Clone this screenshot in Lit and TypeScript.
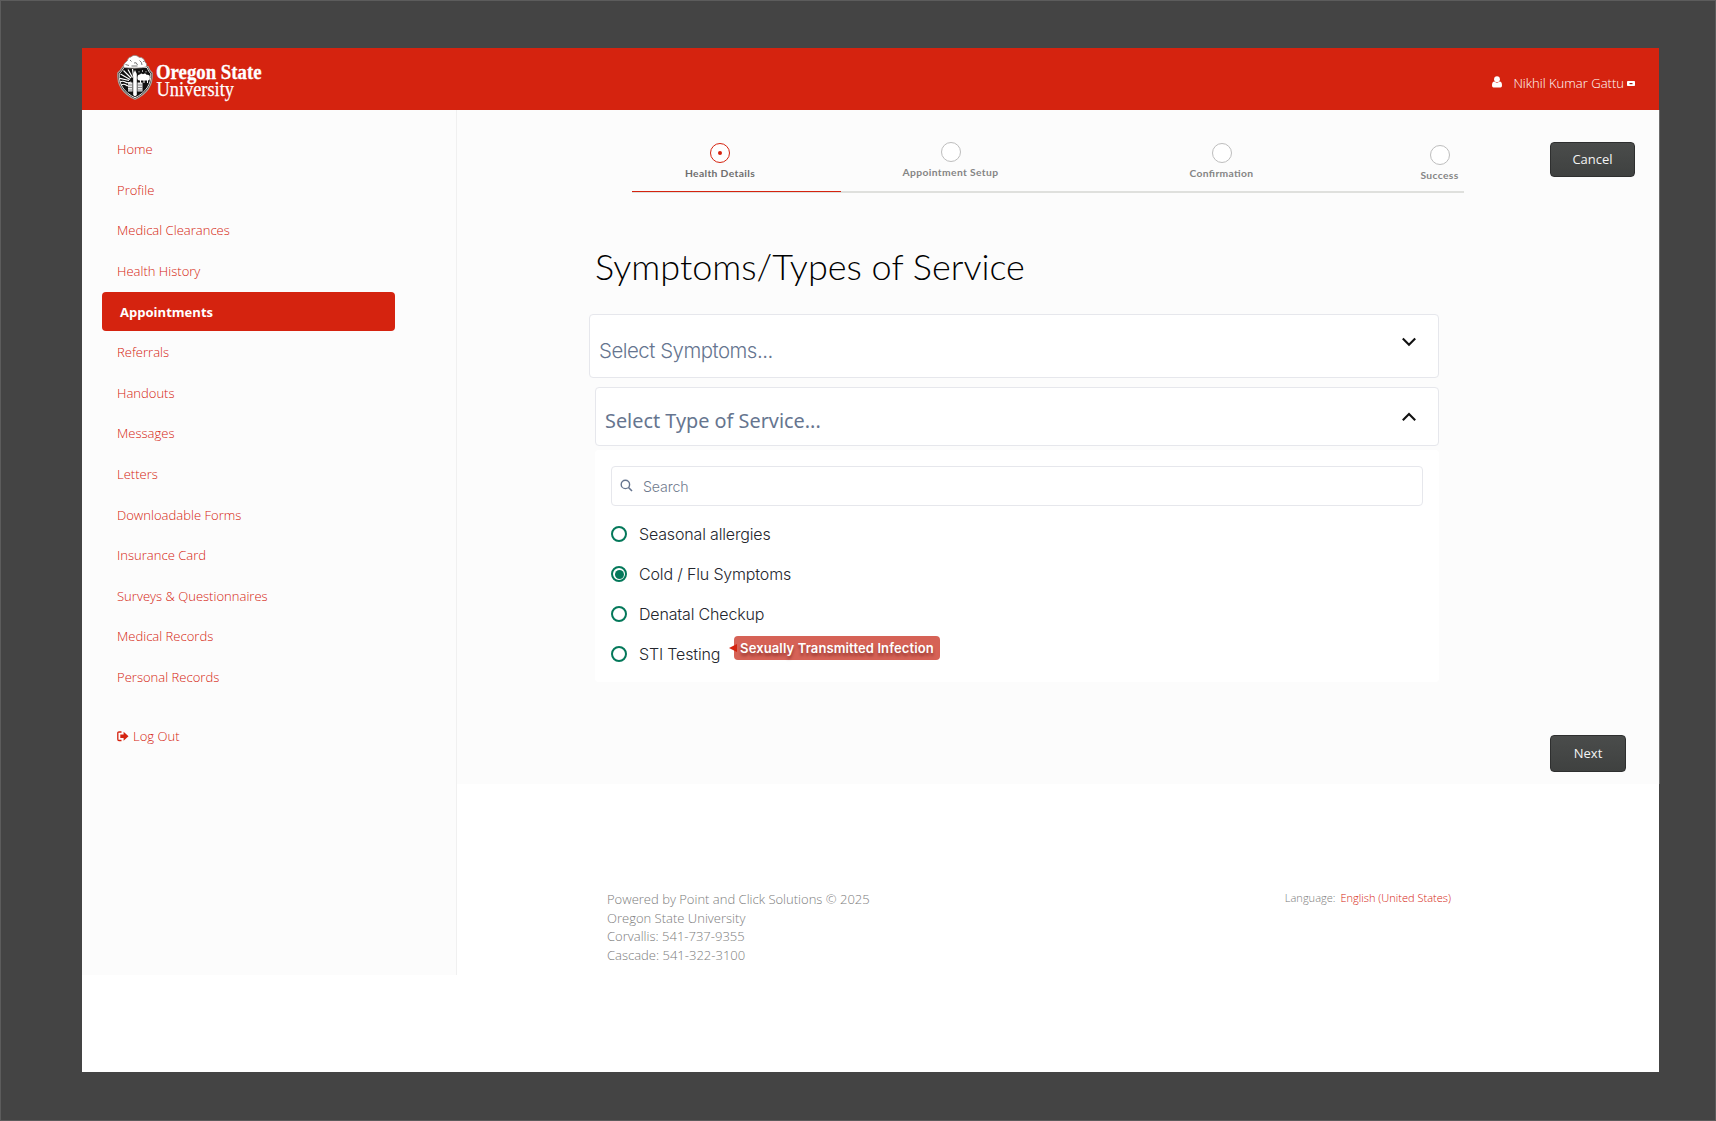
import { LitElement, html, css, svg } from "lit";
import { customElement, property, state } from "lit/decorators.js";
import { classMap } from "lit/directives/class-map.js";

const NAV = [
  "Home", "Profile", "Medical Clearances", "Health History", "Appointments",
  "Referrals", "Handouts", "Messages", "Letters", "Downloadable Forms",
  "Insurance Card", "Surveys & Questionnaires", "Medical Records", "Personal Records",
];

const SERVICES = ["Seasonal allergies", "Cold / Flu Symptoms", "Denatal Checkup", "STI Testing"];

@customElement("osu-logo")
export class OsuLogo extends LitElement {
  static styles = css`
    :host { display: block; width: 150px; height: 50px; }
    .logo { display: block; overflow: visible; }
    .name { font-family: "Liberation Serif", serif; fill: #fff; }
    .strong { font-weight: 700; font-size: 20.5px; stroke: #fff; stroke-width: 0.3px; }
    .light { font-weight: 400; font-size: 20.5px; stroke: #fff; stroke-width: 0.25px; }
  `;
  render() {
    return html`<svg class="logo" width="150" height="50" viewBox="0 0 150 50" role="img">
      ${svg`
      <path d="M.8 19 C3 17 4.500 15 6 12.500 L31 12.500 C32 15.500 33.500 17.500 35.200 19 C36 31 30 39.800 18 45.300 C6 39.800 0 31 .8 19Z" fill="#111" stroke="#a9a29c" stroke-width="1.200"/>
      <path d="M2.200 19.800 C4 18 5.500 16 7 13.500 L30 13.500 C31 16 32.300 18.300 33.800 19.800 C34.300 30.500 28.800 38.500 18 43.800 C7.200 38.500 1.700 30.500 2.200 19.800Z" fill="#111" stroke="#fff" stroke-width=".9"/>
      <path d="M6.300 13.200 C6.500 9.500 8.500 8.500 10.500 6.500 C10.800 4.500 12 3 14 3 C15.500 .8 20 .8 22 3.300 C25 3 27.500 5 28 8 C29.500 9 30 10.500 29.500 12.800 C24 14.500 12 14.500 6.300 13.200Z" fill="#fff" stroke="#8b8580" stroke-width=".8"/>
      <path d="M8.500 10.500 l3.500 1 M13 6 l1.500 1.500 M17 9 q2.500 -1.500 3.500 2 M22.500 6.500 q2.500 1.500 2.500 4.500 M14.500 12 h6 M26 7.500 h.8" stroke="#555" stroke-width=".8" fill="none"/>
      <path d="M3.500 20 L13 25.500 M6.500 16.500 L14 24 M11 15.500 L15.500 23.500 M15.500 15 L16.500 22.500 M3 24.300 L12 26.500" stroke="#fff" stroke-width="1.200"/>
      <path d="M2.800 28 q3 -1.500 5.500 0 t6 0 M4 31 q3 -1.500 5 0 t4 0" stroke="#fff" stroke-width="1.200" fill="none"/>
      <path d="M20.500 23 q0 -3 2.500 -2.500 q1 -2 3 -.3 q2.500 -1.500 3.500 .6 q3.800 -.4 3.300 3 q.5 3 -2.800 2.700 h-7 q-3 .3 -2.500 -3.500Z" fill="#fff"/>
      <path d="M22 17 v1.500 M25.500 16 v2 M29 17 v1.500" stroke="#aaa" stroke-width="1"/>
      <path d="M23.500 26 v3 M27 26 v3 M30.500 26 v3" stroke="#fff" stroke-width="1"/>
      <path d="M18 16 L19.800 20 V41 L18 42.500 L16.200 41 V20Z" fill="#fff"/>
      <path d="M11 28.500 h4.500 v9 h-4.500Z M20.500 28.500 h5 v9 h-5Z" fill="#e9e9e9"/>
      <path d="M11 31 h4.500 M11 33.500 h4.500 M11 36 h4.500 M20.500 31 h5 M20.500 33.500 h5 M20.500 36 h5" stroke="#777" stroke-width=".8"/>
      <text class="name strong" x="39" y="25" textLength="105.500" lengthAdjust="spacingAndGlyphs">Oregon State</text>
      <text class="name light" x="39.500" y="42" textLength="77.500" lengthAdjust="spacingAndGlyphs">University</text>`}
    </svg>`;
  }
}

@customElement("nav-menu")
export class NavMenu extends LitElement {
  @state() private active = "Appointments";
  static styles = css`
    :host { display: block; padding: 19px 61px 0 20px; }
    .item {
      display: flex; align-items: center; box-sizing: border-box; height: 40.6px;
      padding: 0 0 0 15px; cursor: pointer; white-space: nowrap;
      font: 300 13.05px/20px "Open Sans", sans-serif; color: #d5230f;
    }
    .pill { display: flex; align-items: center; }
    .active { padding: 0; }
    .active .pill {
      box-sizing: border-box; width: 293px; height: 39px; padding: 1px 0 0 18px;
      border-radius: 4px; background: #d5230f; color: #fff; font-weight: 700;
    }
    .logout { margin-top: 18.500px; gap: 4px; }
  `;
  render() {
    return html`
      ${NAV.map((n) => html`<div class=${classMap({ item: true, active: n === this.active })}
        @click=${() => (this.active = n)}><span class="pill">${n}</span></div>`)}
      <div class="item logout">
        <svg width="12" height="11" viewBox="0 0 12 11">
          <path d="M4.500 1 H2 Q.8 1 .8 2.200 V8.300 Q.8 9.500 2 9.500 H4.500" fill="none" stroke="#d5230f" stroke-width="1.300"/>
          <path d="M3.300 3.500 H6.600 V.8 L11.500 5.250 L6.600 9.700 V7 H3.300Z" fill="#d5230f"/>
        </svg>
        <span>Log Out</span>
      </div>`;
  }
}

@customElement("progress-steps")
export class ProgressSteps extends LitElement {
  static styles = css`
    :host { display: block; width: 832px; }
    .steps { display: grid; grid-template-columns: 176px 286px 255px 115px; height: 49px; }
    .step { display: flex; flex-direction: column; align-items: center; gap: 2px; }
    .s1, .s3 { padding-top: 1px; }
    .s4 { padding-top: 3px; padding-left: 66px; }
    .s2 { padding-right: 1px; }
    .dot {
      display: flex; align-items: center; justify-content: center; box-sizing: border-box;
      width: 20px; height: 20px; border: 1px solid #bdbdbd; border-radius: 50%; background: #fff;
    }
    .on { border-color: #d5230f; }
    .on::after { content: ""; width: 4px; height: 4px; border-radius: 50%; background: #d5230f; }
    .label {
      font: 700 10.3px/16px Lato, sans-serif; letter-spacing: 0.36px; color: #858585; white-space: nowrap;
      font-feature-settings: "liga" 1;
    }
    .current { color: #6e6e6e; }
    .track { height: 2px; background: #dfe0dd; }
    .bar { width: 209px; height: 1px; background: #d5230f; }
  `;
  render() {
    const steps = ["Health Details", "Appointment Setup", "Confirmation", "Success"];
    return html`<div class="steps">
        ${steps.map((s, i) => html`<div class="step s${i + 1}">
          <span class=${classMap({ dot: true, on: i === 0 })}></span>
          <span class=${classMap({ label: true, current: i === 0 })}>${s}</span></div>`)}
      </div>
      <div class="track"><div class="bar"></div></div>`;
  }
}

@customElement("select-box")
export class SelectBox extends LitElement {
  @property() label = "";
  @property({ type: Boolean }) open = false;
  static styles = css`
    :host {
      display: flex; justify-content: space-between; box-sizing: border-box;
      border: 1px solid #e6e7ec; border-radius: 4px; background: #fff; color: #66758f;
      padding: 0 22px 0 9px;
    }
    .label { padding-top: 21px; font: 350 20.4px/30px Inter, sans-serif; letter-spacing: -0.48px; }
    .wide { padding-top: 17.500px; font: 400 19.85px/30px "Noto Sans", sans-serif; letter-spacing: 0; }
    .chev { margin-top: 21.500px; }
    .up { margin-top: 23.500px; }
  `;
  render() {
    return html`<span class=${classMap({ label: true, wide: this.open })}>${this.label}</span>
      <svg class=${classMap({ chev: true, up: this.open })} width="14" height="10" viewBox="0 0 14 10">
        <path d=${this.open ? "M.8 8.200 L7 2 L13.200 8.200" : "M.8 1.500 L7 7.700 L13.200 1.500"} fill="none" stroke="#111" stroke-width="2.100"/>
      </svg>`;
  }
}

@customElement("service-list")
export class ServiceList extends LitElement {
  @state() private selected = "Cold / Flu Symptoms";
  static styles = css`
    :host { display: block; box-sizing: border-box; height: 232px; padding: 16px; border-radius: 4px; background: #fff; }
    .search {
      display: flex; align-items: center; gap: 10px; box-sizing: border-box; height: 40px;
      padding: 1px 8px 0; border: 1px solid #e6e7ec; border-radius: 4px;
      font: 350 14.2px/20px Inter, sans-serif; letter-spacing: -0.15px; color: #6f7a8d;
    }
    .glass { margin-top: -3px; }
    .list { padding-top: 8px; }
    .row { display: flex; align-items: center; height: 40px; cursor: pointer; }
    .radio {
      display: flex; align-items: center; justify-content: center; box-sizing: border-box;
      width: 16px; height: 16px; margin-right: 12px; border: 2px solid #04785a; border-radius: 50%;
    }
    .checked::after { content: ""; width: 9px; height: 9px; border-radius: 50%; background: #04785a; }
    .text { position: relative; font: 350 16px/24px Inter, sans-serif; letter-spacing: -0.16px; color: #24262d; }
    .tip {
      position: absolute; left: 95px; top: -6px; box-sizing: border-box; width: 206px; height: 24px;
      border-radius: 4px; background: #d66256; color: #fff; text-align: center; white-space: nowrap;
      font: 600 13px/24px Inter, sans-serif; letter-spacing: 0.12px; text-shadow: 0 3px 3px rgba(70, 0, 0, 0.45);
    }
    .tip::before {
      content: ""; position: absolute; left: -5px; top: 8px;
      border: solid transparent; border-width: 4px 8px 4px 0; border-right-color: #d5230f;
    }
  `;
  render() {
    return html`<div class="search">
        <svg class="glass" width="13" height="13" viewBox="0 0 13 13" fill="none" stroke="#66758f">
          <circle cx="5.400" cy="5.400" r="4.200" stroke-width="1.400"/><path d="M8.500 8.500 L12 12" stroke-width="1.600"/>
        </svg><span>Search</span></div>
      <div class="list">
        ${SERVICES.map((s) => html`<div class="row" @click=${() => (this.selected = s)}>
          <span class=${classMap({ radio: true, checked: s === this.selected })}></span>
          <span class="text">${s}${s === "STI Testing" ? html`<span class="tip">Sexually Transmitted Infection</span>` : ""}</span>
        </div>`)}
      </div>`;
  }
}

@customElement("app-root")
export class AppRoot extends LitElement {
  static styles = css`
    :host {
      display: block; box-sizing: border-box; width: 1716px; height: 1121px; overflow: hidden;
      padding: 47px 56px 48px 81px; border: 1px solid #5c5c5c; background: #444;
      font-family: "Open Sans", sans-serif;
    }
    .page { display: flex; flex-direction: column; width: 1577px; height: 1024px; background: #fff; }
    .header { display: flex; justify-content: space-between; box-sizing: border-box; height: 62px; padding: 6px 24px 0 35px; background: #d5230f; flex: none; }
    .user { display: flex; align-items: center; height: 22px; margin-top: 18px; color: #fff; font: 300 13.05px/20px "Open Sans", sans-serif; }
    .person { margin-right: 11px; margin-top: -2px; }
    .badge { margin-left: 3px; }
    .body { display: flex; height: 865px; }
    .side { box-sizing: border-box; width: 375px; border-right: 1px solid #f0f0f0; background: #fcfcfc; flex: none; }
    .content { flex: 1; min-width: 0; }
    .panel { display: flex; box-sizing: border-box; height: 674px; background: #fcfcfc; box-shadow: 1px 0 0 #6b6b6b; }
    .form { width: 1007px; padding-left: 132px; box-sizing: border-box; flex: none; }
    .progress { margin: 32px 0 0 43px; }
    .title { margin: 45px 0 0 6px; height: 56px; font: 300 36px/56px Lato, sans-serif; color: #000; letter-spacing: 0; white-space: nowrap; }
    .symptoms { width: 850px; height: 64px; margin-top: 20px; }
    .service { width: 844px; height: 59px; margin: 9px 0 0 6px; }
    .options { width: 844px; margin: 4px 0 0 6px; }
    .actions { display: flex; flex-direction: column; align-items: flex-start; justify-content: space-between; padding: 32px 0 12px 86px; }
    .btn {
      box-sizing: border-box; width: 85px; height: 35px; padding: 0 0 2px; border: 1px solid #2e2f2f; border-radius: 4px;
      background: linear-gradient(#4a4c4b, #3f4140); color: #f4f4f4; font: 400 13px/20px "Open Sans", sans-serif;
    }
    .next { width: 76px; height: 37px; }
    .footer { display: flex; justify-content: space-between; padding: 105px 208px 0 150px; }
    .address { padding-top: 1px; font: 300 13.02px/18.600px "Open Sans", sans-serif; color: #7c7c7c; }
    .lang { display: flex; gap: 5px; font: 300 11.05px/18px "Open Sans", sans-serif; color: #7c7c7c; }
    .link { color: #d5230f; }
  `;
  render() {
    return html`<div class="page">
      <div class="header">
        <osu-logo></osu-logo>
        <div class="user">
          <svg class="person" width="10" height="12" viewBox="0 0 10 12" fill="#fff">
            <circle cx="5" cy="3.200" r="2.900"/><path d="M0 9.500 Q0 5.500 2.300 5.500 Q5 7.800 7.700 5.500 Q10 5.500 10 9.500 Q10 11.500 8.500 11.500 H1.500 Q0 11.500 0 9.500Z"/>
          </svg>
          <span>Nikhil Kumar Gattu</span>
          <svg class="badge" width="8" height="5" viewBox="0 0 8 5"><rect width="8" height="5" rx=".8" fill="#fff"/><rect x="2.500" y="2" width="3" height="1.200" fill="#a3190b"/></svg>
        </div>
      </div>
      <div class="body">
        <div class="side"><nav-menu></nav-menu></div>
        <div class="content">
          <div class="panel">
            <div class="form">
              <progress-steps class="progress"></progress-steps>
              <h1 class="title">Symptoms/Types of Service</h1>
              <select-box class="symptoms" label="Select Symptoms..."></select-box>
              <select-box class="service" label="Select Type of Service..." open></select-box>
              <service-list class="options"></service-list>
            </div>
            <div class="actions">
              <button class="btn">Cancel</button>
              <button class="btn next">Next</button>
            </div>
          </div>
          <div class="footer">
            <div class="address">
              <div>Powered by Point and Click Solutions © 2025</div>
              <div>Oregon State University</div>
              <div>Corvallis: 541-737-9355</div>
              <div>Cascade: 541-322-3100</div>
            </div>
            <div class="lang"><span>Language:</span><span class="link">English (United States)</span></div>
          </div>
        </div>
      </div>
    </div>`;
  }
}
